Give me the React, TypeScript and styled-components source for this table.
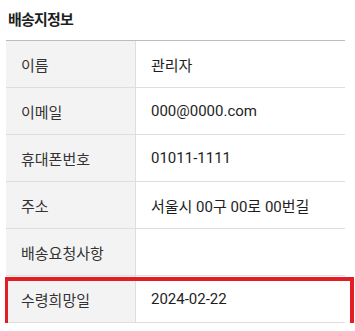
import React from 'react';
import styled, { createGlobalStyle } from 'styled-components';

const GlobalStyle = createGlobalStyle`
  body {
    margin: 0;
    background: #fff;
    font-family: Roboto, "Noto Sans CJK KR", sans-serif;
  }
`;

const Section = styled.section`
  padding: 0 10px 0 6px;
`;

const Title = styled.h3`
  margin: 0;
  padding: 8px 0 0 2px;
  height: 40px;
  box-sizing: border-box;
  font-size: 15px;
  font-weight: 700;
  color: #1e1e1e;
  letter-spacing: -0.8px;
`;

const InfoTable = styled.div`
  width: 339px;
  border-top: 1px solid #bcbcbc;
`;

const Row = styled.div<{ $marked?: boolean }>`
  position: relative;
  display: grid;
  grid-template-columns: 130px 1fr;
  height: 47px;
  box-sizing: border-box;
  border-bottom: 1px solid #dedede;

  ${({ $marked }) =>
    $marked &&
    `
    &::after {
      content: '';
      position: absolute;
      left: -1px;
      top: 1px;
      width: 349px;
      height: 52px;
      box-sizing: border-box;
      border: 4px solid #e21d23;
      border-left-width: 3px;
      pointer-events: none;
    }
  `}
`;

const Label = styled.div`
  display: flex;
  align-items: center;
  padding-left: 15px;
  background: #f3f3f3;
  border-right: 1px solid #dedede;
  font-size: 15px;
  color: #333;
`;

const Value = styled.div`
  display: flex;
  align-items: center;
  padding-left: 15px;
  font-size: 15px;
  color: #1e1e1e;
`;

const rows = [
  { label: '이름', value: '관리자' },
  { label: '이메일', value: '000@0000.com' },
  { label: '휴대폰번호', value: '01011-1111' },
  { label: '주소', value: '서울시 00구 00로 00번길' },
  { label: '배송요청사항', value: '' },
  { label: '수령희망일', value: '2024-02-22', marked: true },
];

const App: React.FC = () => {
  return (
    <>
      <GlobalStyle />
      <Section>
        <Title>배송지정보</Title>
        <InfoTable>
          {rows.map((row) => (
            <Row key={row.label} $marked={row.marked}>
              <Label>{row.label}</Label>
              <Value>{row.value}</Value>
            </Row>
          ))}
        </InfoTable>
      </Section>
    </>
  );
};

export default App;
